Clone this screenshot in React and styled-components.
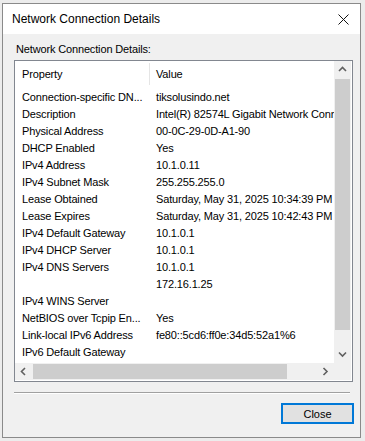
import React from 'react';
import styled, { createGlobalStyle } from 'styled-components';

const GlobalStyle = createGlobalStyle`
  body {
    margin: 0;
    background: #ececec;
    font-family: "Liberation Sans", Arial, sans-serif;
  }
`;

const rows = [
  ['Connection-specific DN...', 'tiksolusindo.net'],
  ['Description', 'Intel(R) 82574L Gigabit Network Connection'],
  ['Physical Address', '00-0C-29-0D-A1-90'],
  ['DHCP Enabled', 'Yes'],
  ['IPv4 Address', '10.1.0.11'],
  ['IPv4 Subnet Mask', '255.255.255.0'],
  ['Lease Obtained', 'Saturday, May 31, 2025 10:34:39 PM'],
  ['Lease Expires', 'Saturday, May 31, 2025 10:42:43 PM'],
  ['IPv4 Default Gateway', '10.1.0.1'],
  ['IPv4 DHCP Server', '10.1.0.1'],
  ['IPv4 DNS Servers', '10.1.0.1'],
  ['', '172.16.1.25'],
  ['IPv4 WINS Server', ''],
  ['NetBIOS over Tcpip En...', 'Yes'],
  ['Link-local IPv6 Address', 'fe80::5cd6:ff0e:34d5:52a1%6'],
  ['IPv6 Default Gateway', ''],
  ['IPv6 DNS Servers', ''],
];

const Chevron = ({ dir }) => {
  const pts = {
    up: '1,5 4.5,1.5 8,5',
    down: '1,1.5 4.5,5 8,1.5',
    left: '5,1 1.5,4.5 5,8',
    right: '1.5,1 5,4.5 1.5,8',
  }[dir];
  const vertical = dir === 'up' || dir === 'down';
  return (
    <svg width={vertical ? 9 : 7} height={vertical ? 7 : 9} viewBox={vertical ? '0 0 9 7' : '0 0 7 9'}>
      <polyline points={pts} fill="none" stroke="#606060" strokeWidth="1.6" />
    </svg>
  );
};

export default function App() {
  return (
    <>
      <GlobalStyle />
      <Window>
        <TitleBar>
          <Title>Network Connection Details</Title>
          <CloseIcon>
            <svg width="11" height="11" viewBox="0 0 11 11">
              <path d="M0.5 0.5 L10.5 10.5 M10.5 0.5 L0.5 10.5" stroke="#111" strokeWidth="1" />
            </svg>
          </CloseIcon>
        </TitleBar>
        <Body>
          <GroupLabel>Network Connection Details:</GroupLabel>
          <ListBox>
            <Viewport>
              <HeaderRow>
                <HeaderCell $first>Property</HeaderCell>
                <HeaderCell>Value</HeaderCell>
              </HeaderRow>
              {rows.map(([name, value], i) => (
                <Row key={i}>
                  <Cell $first>{name}</Cell>
                  <Cell>{value}</Cell>
                </Row>
              ))}
            </Viewport>
            <VScroll>
              <ArrowBox><Chevron dir="up" /></ArrowBox>
              <VTrack>
                <VThumb />
              </VTrack>
              <ArrowBox><Chevron dir="down" /></ArrowBox>
            </VScroll>
            <HScroll>
              <ArrowBox><Chevron dir="left" /></ArrowBox>
              <HTrack>
                <HThumb />
              </HTrack>
              <ArrowBox><Chevron dir="right" /></ArrowBox>
            </HScroll>
            <Corner />
          </ListBox>
          <Separator />
          <Footer>
            <Button>Close</Button>
          </Footer>
        </Body>
      </Window>
    </>
  );
}

const Window = styled.div`
  margin: 3px 0 0 2px;
  width: 357px;
  height: 433px;
  border: 1px solid #8a8a8a;
  background: #f0f0f0;
  display: flex;
  flex-direction: column;
`;

const TitleBar = styled.div`
  height: 30px;
  background: #ffffff;
  display: flex;
  align-items: center;
  justify-content: space-between;
  padding: 0 7px 0 9px;
  flex-shrink: 0;
`;

const Title = styled.div`
  font-size: 12px;
  color: #000;
`;

const CloseIcon = styled.div`
  width: 20px;
  display: flex;
  justify-content: center;
  align-items: center;
`;

const Body = styled.div`
  flex: 1;
  padding: 9px 0 0 11px;
  font-size: 11px;
  letter-spacing: -0.15px;
  color: #000;
`;

const GroupLabel = styled.div`
  height: 17px;
  line-height: 13px;
  padding-left: 2px;
`;

const ListBox = styled.div`
  width: 337px;
  height: 320px;
  border: 1px solid #828790;
  background: #fff;
  display: grid;
  grid-template-columns: 319px 17px;
  grid-template-rows: 302px 17px;
`;

const Viewport = styled.div`
  overflow: hidden;
  background: #fff;
`;

const HeaderRow = styled.div`
  height: 28px;
  display: flex;
  align-items: flex-start;
  padding-top: 2px;
  box-sizing: border-box;
  white-space: nowrap;
`;

const HeaderCell = styled.div`
  width: ${(p) => (p.$first ? '135px' : 'auto')};
  flex-shrink: 0;
  height: 22px;
  line-height: 22px;
  padding-left: ${(p) => (p.$first ? '7px' : '6px')};
  box-sizing: border-box;
  border-right: ${(p) => (p.$first ? '1px solid #e5e5e5' : 'none')};
`;

const Row = styled.div`
  height: 17px;
  line-height: 17px;
  display: flex;
  white-space: nowrap;
`;

const Cell = styled.div`
  width: ${(p) => (p.$first ? '135px' : 'auto')};
  flex-shrink: 0;
  padding-left: ${(p) => (p.$first ? '7px' : '6px')};
  box-sizing: border-box;
`;

const VScroll = styled.div`
  background: #f0f0f0;
  display: flex;
  flex-direction: column;
`;

const HScroll = styled.div`
  background: #f0f0f0;
  display: flex;
`;

const ArrowBox = styled.div`
  width: 17px;
  height: 17px;
  flex-shrink: 0;
  display: flex;
  align-items: center;
  justify-content: center;
`;

const VTrack = styled.div`
  flex: 1;
  padding: 1px 1px 0 1px;
`;

const VThumb = styled.div`
  height: 251px;
  background: #cdcdcd;
`;

const HTrack = styled.div`
  flex: 1;
  padding: 1px 0 1px 1px;
`;

const HThumb = styled.div`
  width: 254px;
  height: 100%;
  background: #cdcdcd;
`;

const Corner = styled.div`
  background: #f0f0f0;
`;

const Separator = styled.div`
  width: 336px;
  margin-top: 10px;
  border-top: 1px solid #a0a0a0;
  border-bottom: 1px solid #ffffff;
`;

const Footer = styled.div`
  display: flex;
  justify-content: flex-end;
  padding: 9px 6px 0 0;
`;

const Button = styled.button`
  width: 73px;
  height: 21px;
  background: #e1e1e1;
  border: 2px solid #0078d7;
  font-family: "Liberation Sans", Arial, sans-serif;
  font-size: 11px;
  color: #000;
  padding: 0;
`;
